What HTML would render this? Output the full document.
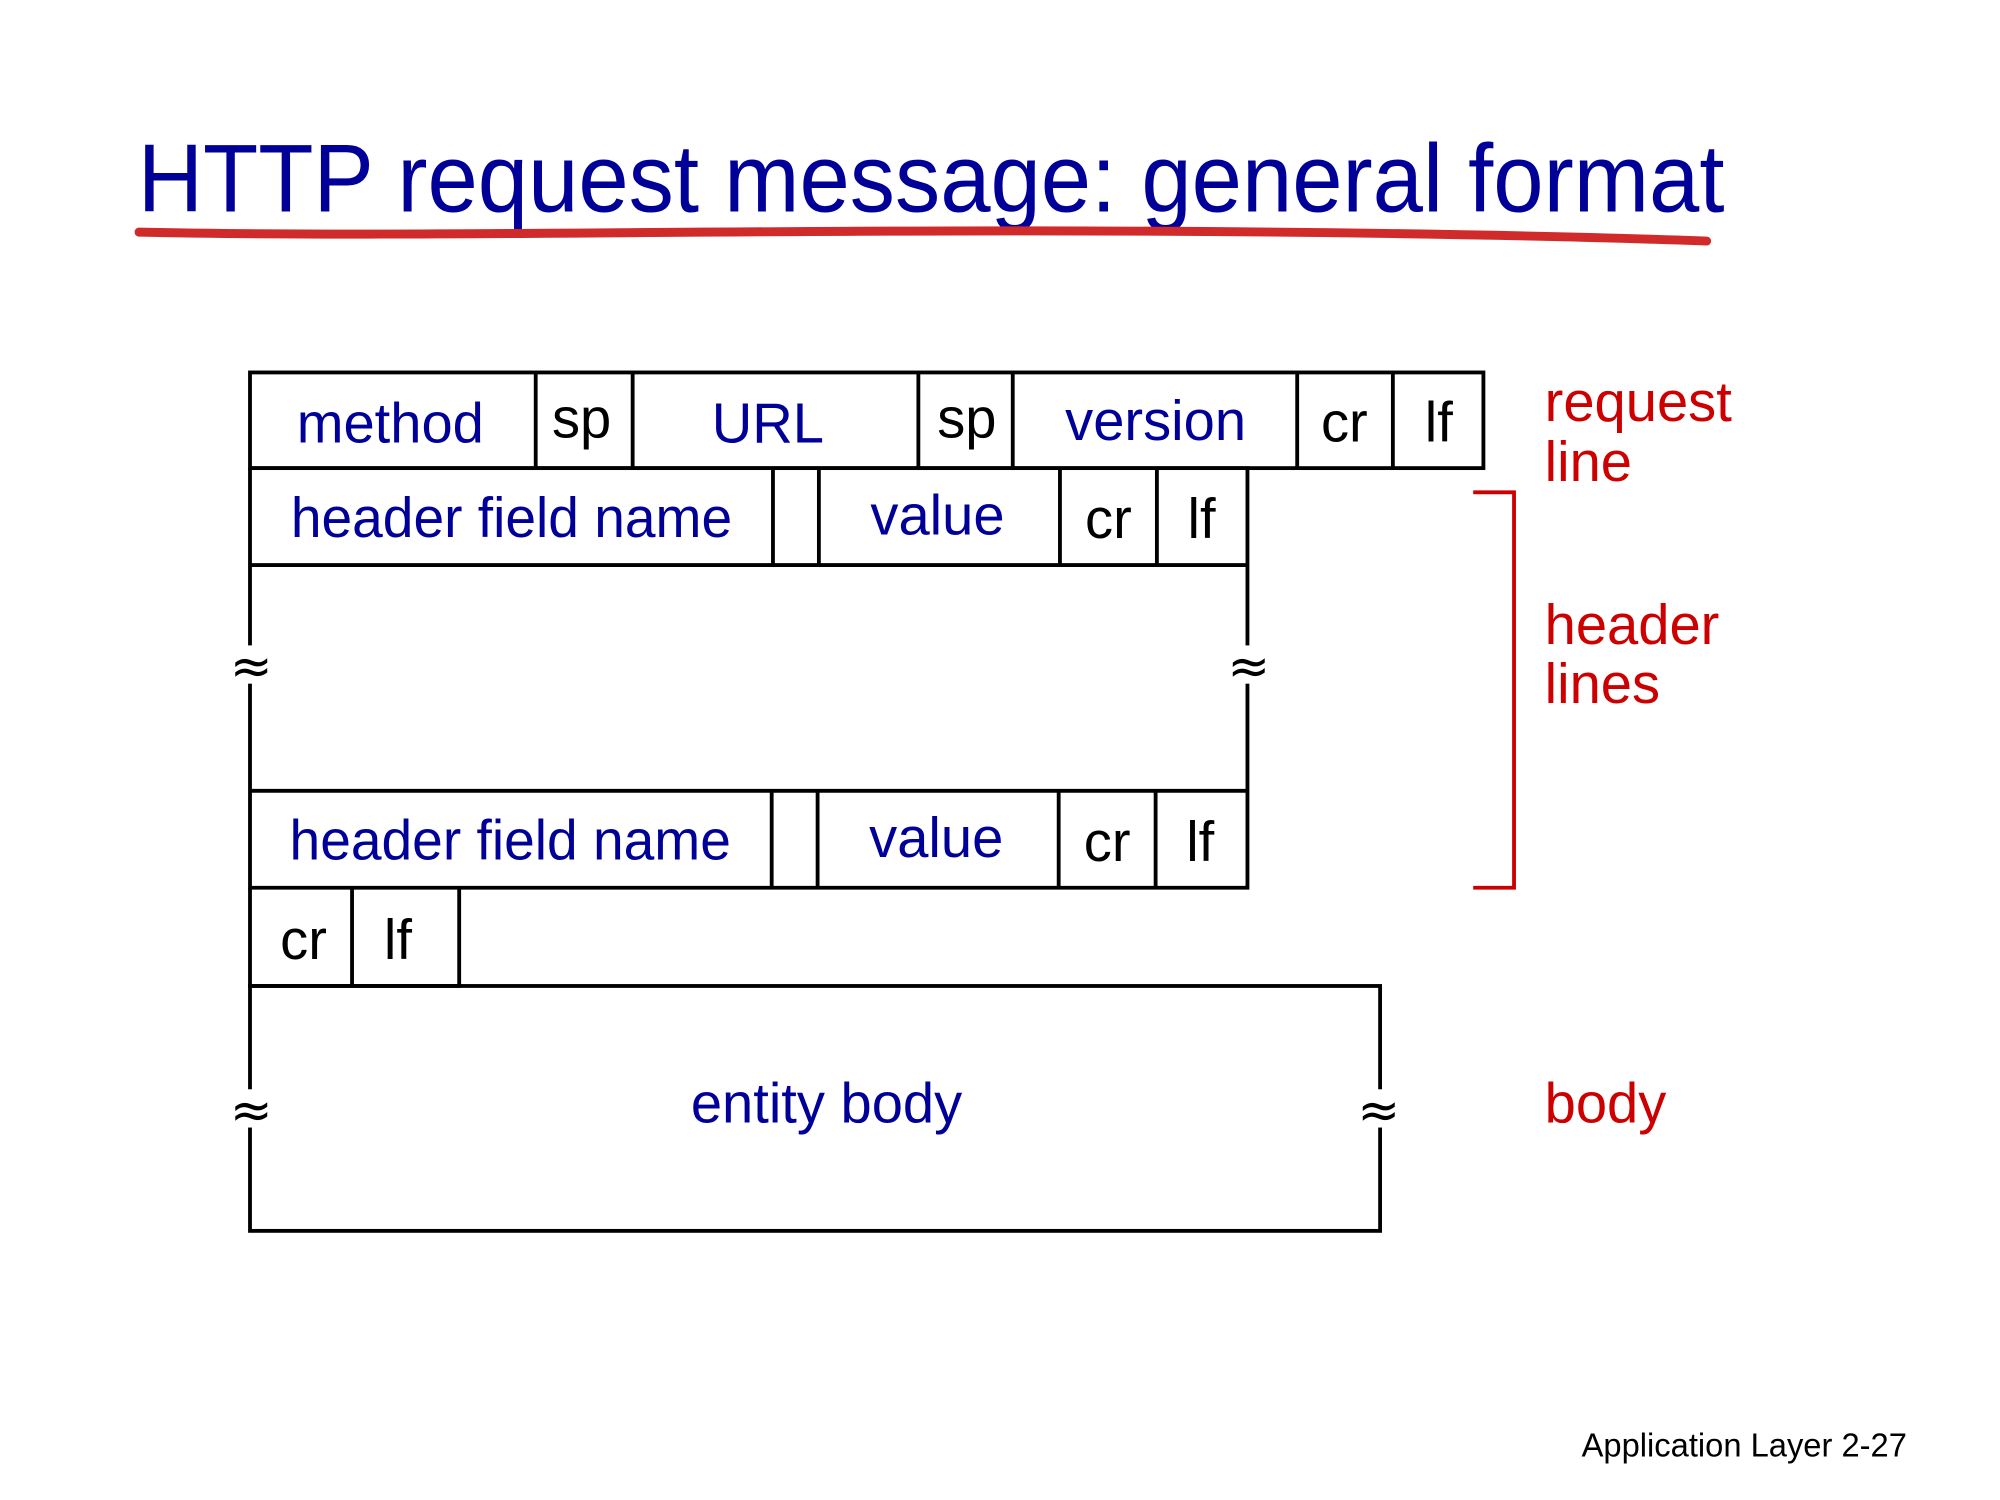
<!DOCTYPE html>
<html><head><meta charset="utf-8"><style>
html,body{margin:0;padding:0;background:#fff;}
svg{display:block;}
</style></head><body>
<svg width="2000" height="1500" viewBox="0 0 1568 1176" xmlns="http://www.w3.org/2000/svg" font-family="'Liberation Sans', sans-serif">
<rect width="1568" height="1176" fill="#fff"/>
<text x="108" y="166" font-size="76" fill="#000099" textLength="1244" lengthAdjust="spacingAndGlyphs">HTTP request message: general format</text>
<path d="M109 182 C 300 186, 500 181, 800 181 C 1000 181, 1200 184, 1338 189" stroke="#d02a2a" stroke-width="7" fill="none" stroke-linecap="round"/>
<g stroke="#000" stroke-width="3" fill="none">
<rect x="196" y="292" width="967" height="75"/>
<path d="M420 292V367M496 292V367M720 292V367M794 292V367M1017 292V367M1092 292V367"/>
<path d="M196 367V696H978V367H196M606 367V443M642 367V443M831 367V443M907 367V443M196 443H978M196 620H978M605 620V696M641 620V696M830 620V696M906 620V696"/>
<path d="M196 696V773H360V696M276 696V773"/>
<rect x="196" y="773" width="886" height="192"/>
</g>
<g fill="#fff"><rect x="188" y="506" width="16" height="30"/><rect x="970" y="506" width="16" height="30"/><rect x="188" y="854" width="16" height="30"/><rect x="1074" y="854" width="16" height="30"/></g>
<g font-size="40" fill="#000" text-anchor="middle" font-family="'DejaVu Sans', sans-serif"><text x="197" y="536">≈</text><text x="979" y="536">≈</text><text x="197" y="884">≈</text><text x="1081" y="884">≈</text></g>
<g font-size="44" fill="#000099" text-anchor="middle">
<text x="306" y="347">method</text><text x="602" y="347">URL</text><text x="906" y="345">version</text>
<text x="401" y="421" textLength="346" lengthAdjust="spacingAndGlyphs">header field name</text><text x="735" y="419">value</text>
<text x="400" y="674" textLength="346" lengthAdjust="spacingAndGlyphs">header field name</text><text x="734" y="672">value</text>
<text x="648" y="880">entity body</text>
</g>
<g font-size="44" fill="#000" text-anchor="middle">
<text x="456" y="343">sp</text><text x="758" y="343">sp</text><text x="1054" y="346">cr</text><text x="1128" y="346">lf</text>
<text x="869" y="422">cr</text><text x="942" y="422">lf</text>
<text x="868" y="675">cr</text><text x="941" y="675">lf</text>
<text x="238" y="752">cr</text><text x="312" y="752">lf</text>
</g>
<g font-size="44" fill="#cc0000">
<text x="1211" y="330">request</text><text x="1211" y="377">line</text>
<text x="1211" y="505">header</text><text x="1211" y="551">lines</text>
<text x="1211" y="880">body</text>
</g>
<path d="M1155 386H1187V696H1155" stroke="#cc0000" stroke-width="3" fill="none"/>
<text x="1240" y="1142" font-size="26" fill="#000" textLength="255" lengthAdjust="spacingAndGlyphs">Application Layer 2-27</text>
</svg>
</body></html>
